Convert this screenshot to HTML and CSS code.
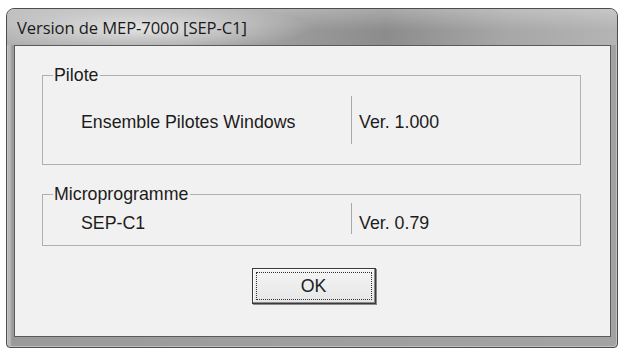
FILE: index.html
```html
<!DOCTYPE html>
<html lang="fr">
<head>
<meta charset="utf-8">
<title>Version de MEP-7000 [SEP-C1]</title>
<link rel="stylesheet" href="styles.css">
</head>
<body>
<div class="window">
  <div class="titlebar"><span class="title">Version de MEP-7000 [SEP-C1]</span></div>
  <div class="client">
    <fieldset class="group group-driver">
      <legend>Pilote</legend>
      <div class="row row-driver">
        <span class="name">Ensemble Pilotes Windows</span>
        <span class="sep"></span>
        <span class="ver">Ver. 1.000</span>
      </div>
    </fieldset>
    <fieldset class="group group-firmware">
      <legend>Microprogramme</legend>
      <div class="row row-firmware">
        <span class="name">SEP-C1</span>
        <span class="sep"></span>
        <span class="ver">Ver. 0.79</span>
      </div>
    </fieldset>
    <div class="actions">
      <button class="ok" type="button"><span class="focus">OK</span></button>
    </div>
  </div>
</div>
</body>
</html>
```
FILE: styles.css
```css
html, body {
  margin: 0;
  padding: 0;
  background: #ffffff;
}
body {
  width: 620px;
  height: 348px;
  overflow: hidden;
  font-family: "Liberation Sans", Arial, sans-serif;
  color: #1c1c1c;
}
.window {
  box-sizing: border-box;
  margin: 8px 0 0 6px;
  width: 612px;
  height: 340px;
  border: 1px solid #4d4d4d;
  border-radius: 8px 8px 4px 4px;
  padding: 0 6px 10px 7px;
  background:
    linear-gradient(to right, #8a8a8a 0, #c4c4c4 2px, #9a9a9a 5px, #a3a3a3 100%);
  box-shadow: inset 1px 1px 0 #c8c8c8, inset -1px -1px 0 #c0c0c0;
  display: flex;
  flex-direction: column;
}
.titlebar {
  height: 36px;
  margin: 0 -6px 0 -7px;
  padding-left: 10px;
  display: flex;
  align-items: center;
  border-radius: 7px 7px 0 0;
  background:
    radial-gradient(ellipse 170px 24px at 135px 19px, rgba(232,232,232,0.95), rgba(232,232,232,0) 100%),
    linear-gradient(to bottom, rgba(255,255,255,0.25), rgba(255,255,255,0) 60%),
    linear-gradient(to right, #b0b0b0 0%, #9c9c9c 45%, #8c8c8c 62%, #a7a7a7 82%, #b4b4b4 100%);
}
.title {
  font-family: "Open Sans", "Noto Sans", sans-serif;
  font-size: 16.6px;
  color: #1a1a1a;
  letter-spacing: -0.1px;
}
.client {
  flex: 1;
  border: 1px solid #5a5a5a;
  background: #f1f1f1;
  display: flex;
  flex-direction: column;
}
.group {
  margin: 0 29px 0 27px;
  padding: 0 0 0 38px;
  border: 1px solid #b0b0b0;
  min-width: 0;
}
.group legend {
  margin-left: -28px;
  padding: 0 2px 0 1px;
  font-size: 17.8px;
  line-height: 16px;
  color: #1c1c1c;
}
.group-driver {
  margin-top: 21px;
  padding-top: 13px;
  padding-bottom: 20px;
}
.group-firmware {
  margin-top: 21px;
  padding-top: 1px;
  padding-bottom: 11px;
}
.row {
  display: flex;
  align-items: center;
  font-size: 17.8px;
  line-height: 20px;
}
.row-driver { height: 48px; }
.row-firmware {
  height: 31px;
  align-items: flex-start;
}
.name {
  width: 270px;
  padding-top: 3px;
}
.row-firmware .name,
.row-firmware .ver { padding-top: 10px; }
.sep {
  align-self: stretch;
  width: 1px;
  background: #a8a8a8;
}
.ver {
  margin-left: 7px;
  padding-top: 3px;
}
.actions {
  display: flex;
  justify-content: center;
  margin-top: 22px;
  padding-left: 2px;
}
.ok {
  box-sizing: border-box;
  width: 124px;
  height: 36px;
  padding: 3px;
  border: 1px solid #3a3a3a;
  background: linear-gradient(to bottom, #f4f4f4, #e6e6e6);
  box-shadow: inset -1px -1px 0 #8a8a8a, inset 1px 1px 0 #ffffff, 1px 1px 0 #8a8a8a;
  font-family: "Liberation Sans", Arial, sans-serif;
  font-size: 17.8px;
  color: #1c1c1c;
  display: flex;
}
.focus {
  flex: 1;
  border: 1px dotted #333;
  display: flex;
  align-items: center;
  justify-content: center;
}
```
